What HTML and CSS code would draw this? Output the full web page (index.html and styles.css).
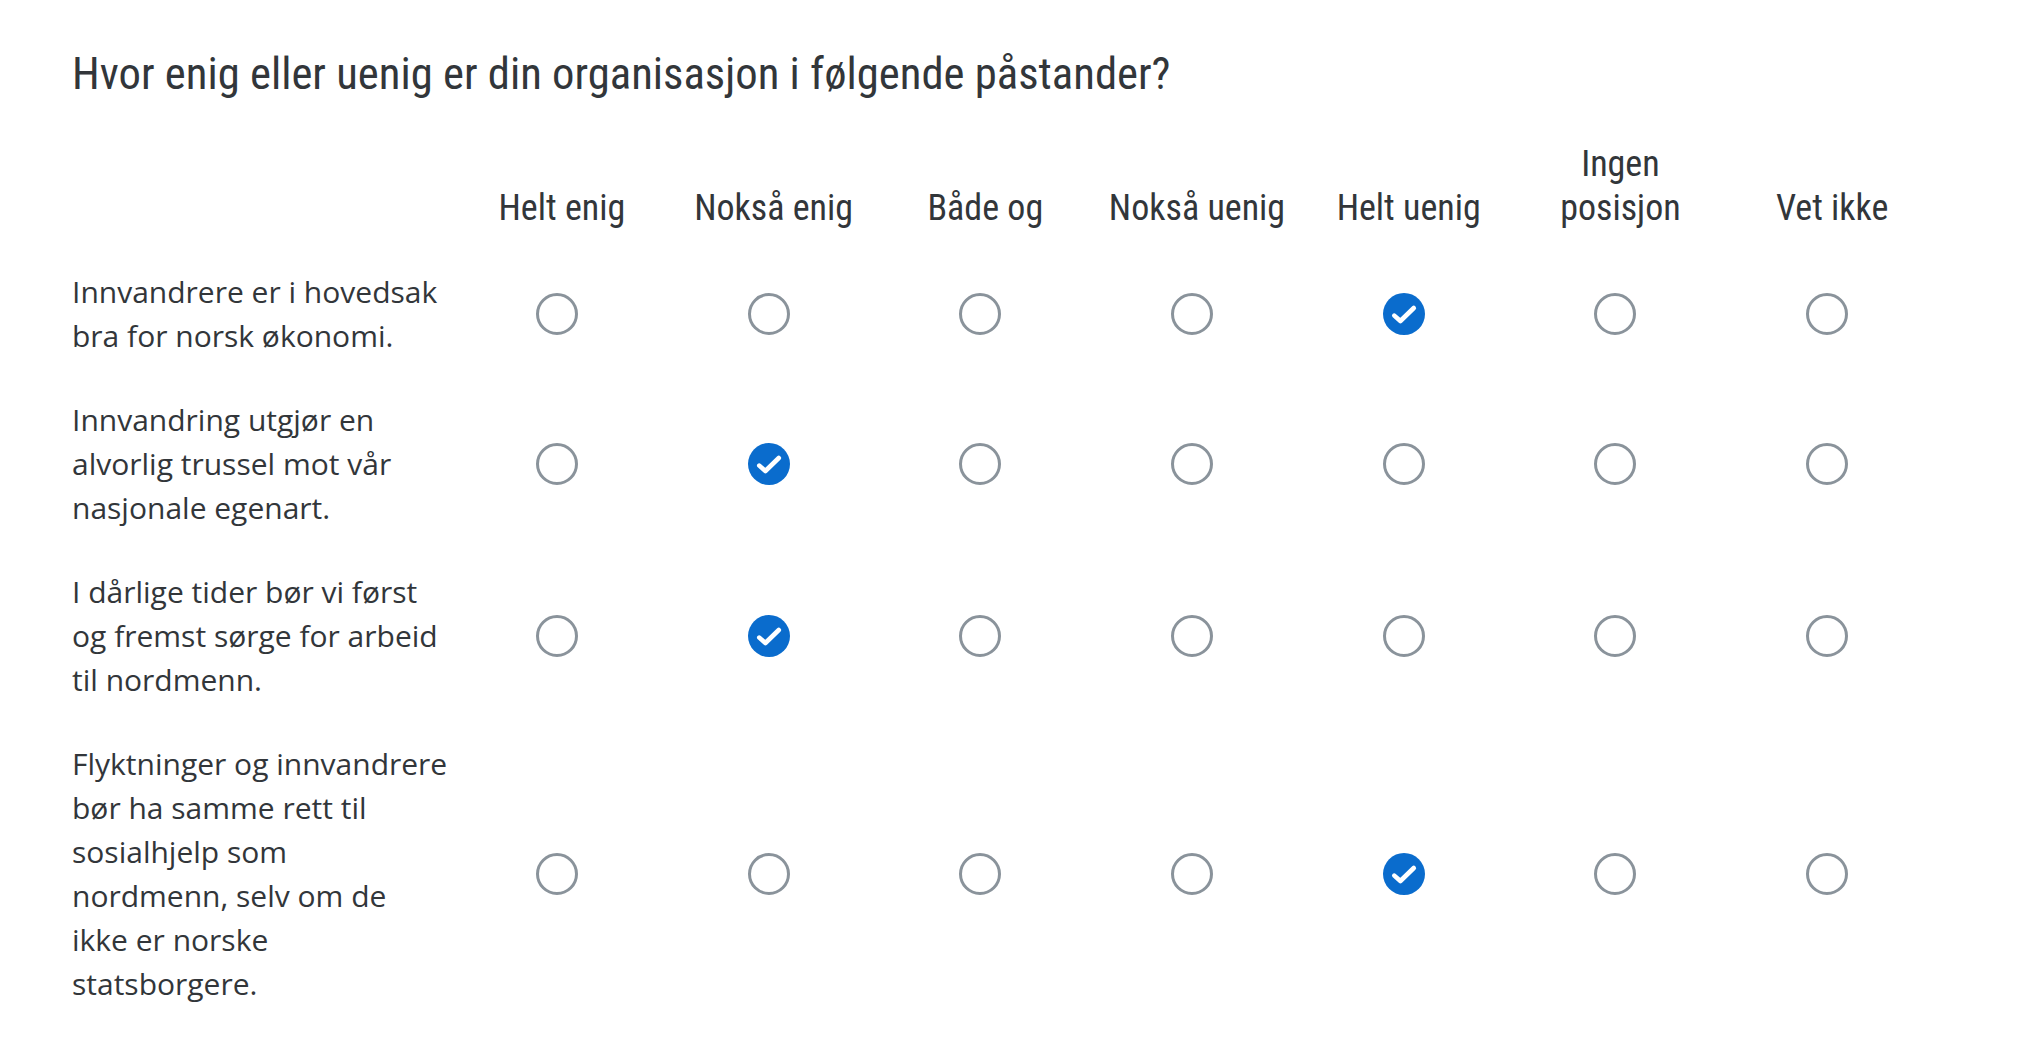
FILE: index.html
```html
<!DOCTYPE html>
<html lang="no">
<head>
<meta charset="utf-8">
<title>Matrise</title>
<link rel="stylesheet" href="styles.css">
</head>
<body>
<main class="question">
  <h1 class="question-text">Hvor enig eller uenig er din organisasjon i følgende påstander?</h1>
  <div class="matrix">
    <div class="head-row">
      <div class="head-cell head-blank"></div>
      <div class="head-cell">Helt enig</div>
      <div class="head-cell">Nokså enig</div>
      <div class="head-cell">Både og</div>
      <div class="head-cell">Nokså uenig</div>
      <div class="head-cell">Helt uenig</div>
      <div class="head-cell">Ingen<br>posisjon</div>
      <div class="head-cell">Vet ikke</div>
    </div>

    <div class="row">
      <div class="label">Innvandrere er i hovedsak<br>bra for norsk økonomi.</div>
      <div class="cell"><span class="radio"></span></div>
      <div class="cell"><span class="radio"></span></div>
      <div class="cell"><span class="radio"></span></div>
      <div class="cell"><span class="radio"></span></div>
      <div class="cell"><span class="radio checked"><svg viewBox="0 0 42 42"><path d="M11.3 22.6 L17.4 28 L30.8 15"/></svg></span></div>
      <div class="cell"><span class="radio"></span></div>
      <div class="cell"><span class="radio"></span></div>
    </div>

    <div class="row">
      <div class="label">Innvandring utgjør en<br>alvorlig trussel mot vår<br>nasjonale egenart.</div>
      <div class="cell"><span class="radio"></span></div>
      <div class="cell"><span class="radio checked"><svg viewBox="0 0 42 42"><path d="M11.3 22.6 L17.4 28 L30.8 15"/></svg></span></div>
      <div class="cell"><span class="radio"></span></div>
      <div class="cell"><span class="radio"></span></div>
      <div class="cell"><span class="radio"></span></div>
      <div class="cell"><span class="radio"></span></div>
      <div class="cell"><span class="radio"></span></div>
    </div>

    <div class="row">
      <div class="label">I dårlige tider bør vi først<br>og fremst sørge for arbeid<br>til nordmenn.</div>
      <div class="cell"><span class="radio"></span></div>
      <div class="cell"><span class="radio checked"><svg viewBox="0 0 42 42"><path d="M11.3 22.6 L17.4 28 L30.8 15"/></svg></span></div>
      <div class="cell"><span class="radio"></span></div>
      <div class="cell"><span class="radio"></span></div>
      <div class="cell"><span class="radio"></span></div>
      <div class="cell"><span class="radio"></span></div>
      <div class="cell"><span class="radio"></span></div>
    </div>

    <div class="row">
      <div class="label">Flyktninger og innvandrere<br>bør ha samme rett til<br>sosialhjelp som<br>nordmenn, selv om de<br>ikke er norske<br>statsborgere.</div>
      <div class="cell"><span class="radio"></span></div>
      <div class="cell"><span class="radio"></span></div>
      <div class="cell"><span class="radio"></span></div>
      <div class="cell"><span class="radio"></span></div>
      <div class="cell"><span class="radio checked"><svg viewBox="0 0 42 42"><path d="M11.3 22.6 L17.4 28 L30.8 15"/></svg></span></div>
      <div class="cell"><span class="radio"></span></div>
      <div class="cell"><span class="radio"></span></div>
    </div>
  </div>
</main>
</body>
</html>
```
FILE: styles.css
```css
html, body {
  margin: 0;
  padding: 0;
  background: #ffffff;
}

body {
  color: #32363a;
  font-family: "Open Sans", "Noto Sans", sans-serif;
}

.question {
  padding: 46px 0 0 72px;
  width: 1861px;
}

.question-text {
  margin: 0;
  font-family: Roboto, "Liberation Sans", sans-serif;
  font-stretch: 75%;
  font-weight: 380;
  font-size: 44.7px;
  line-height: 56px;
  color: #32363a;
}

.matrix {
  margin-top: 39.5px;
}

.head-row,
.row {
  display: grid;
  grid-template-columns: 379px repeat(7, 1fr);
}

.head-row {
  align-items: end;
  padding-bottom: 20px;
}

.head-cell {
  font-family: Roboto, "Liberation Sans", sans-serif;
  font-stretch: 75%;
  font-weight: 380;
  font-size: 36px;
  line-height: 44px;
  text-align: center;
  padding: 0 6px 0 16px;
}

.row {
  align-items: center;
  padding: 20px 0;
}

.label {
  font-size: 30px;
  line-height: 44px;
  white-space: nowrap;
}

.cell {
  display: flex;
  justify-content: center;
  align-items: center;
}

.radio {
  width: 42px;
  height: 42px;
  box-sizing: border-box;
  border: 3.5px solid #8a939b;
  border-radius: 50%;
  display: block;
}

.radio.checked {
  border: none;
  background: #0a6ccd;
}

.radio svg {
  display: block;
  width: 42px;
  height: 42px;
}

.radio svg path {
  fill: none;
  stroke: #ffffff;
  stroke-width: 4.6;
  stroke-linecap: round;
  stroke-linejoin: round;
}
```
